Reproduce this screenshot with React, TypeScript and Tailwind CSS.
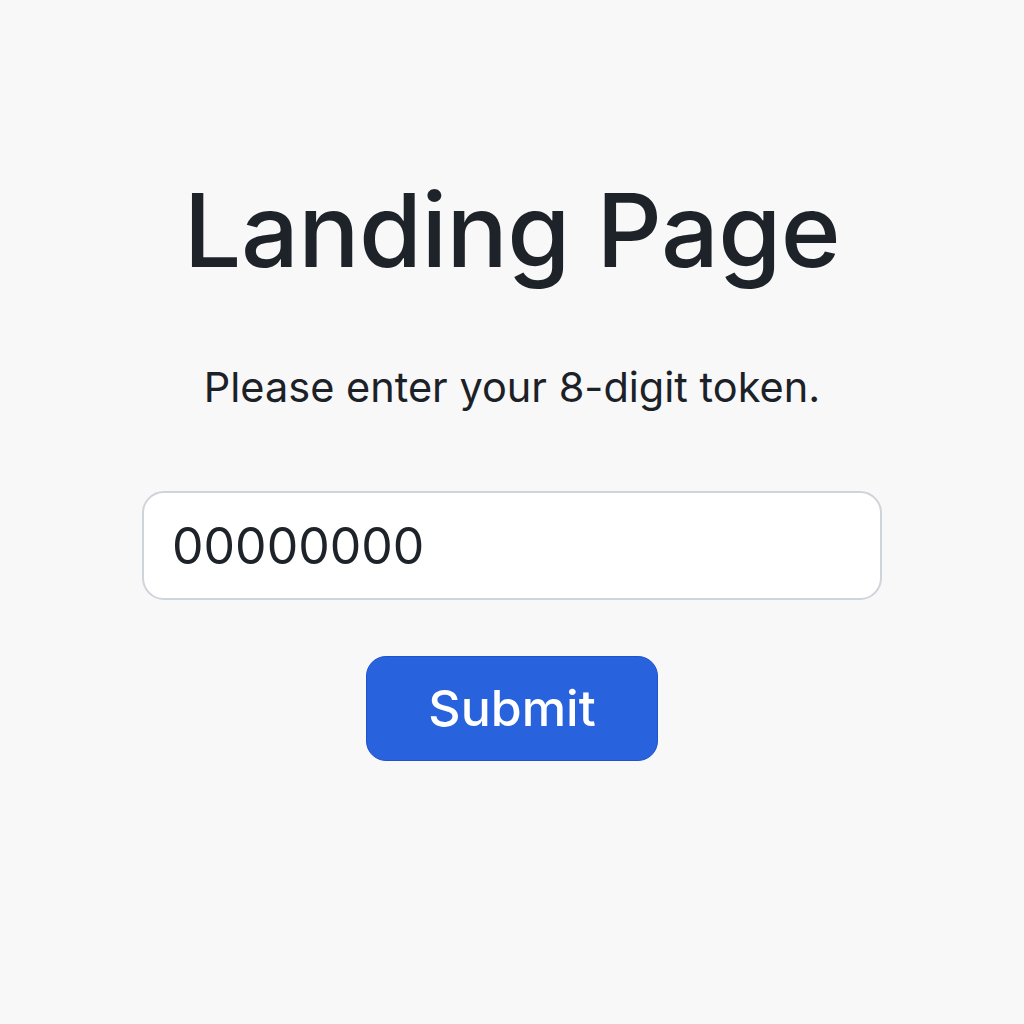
import React, { useState } from 'react';

const App: React.FC = () => {
  const [token, setToken] = useState('00000000');

  return (
    <div className="min-h-screen w-full bg-[#f8f8f8] flex flex-col items-center pt-[170px] font-['Inter',sans-serif] text-[#1e2329]">
      {/* Title */}
      <h1 className="text-[102px] leading-[120px] font-[550] tracking-[-0.6px]">Landing Page</h1>

      {/* Prompt */}
      <p className="mt-[73px] text-[41.5px] leading-[48px] text-[#1c2127]">Please enter your 8-digit token.</p>

      {/* Token input */}
      <input
        value={token}
        onChange={(e) => setToken(e.target.value)}
        className="mt-[80px] w-[740px] h-[109px] rounded-[22px] border-2 border-[#cfd3da] bg-white px-[28px] text-[50px] text-[#1e2329] outline-none"
      />

      {/* Submit */}
      <button className="mt-[56px] w-[292px] h-[105px] rounded-[20px] bg-[#2862dc] border border-[#1f55cc] text-white text-[50px] font-medium">
        Submit
      </button>
    </div>
  );
};

export default App;
